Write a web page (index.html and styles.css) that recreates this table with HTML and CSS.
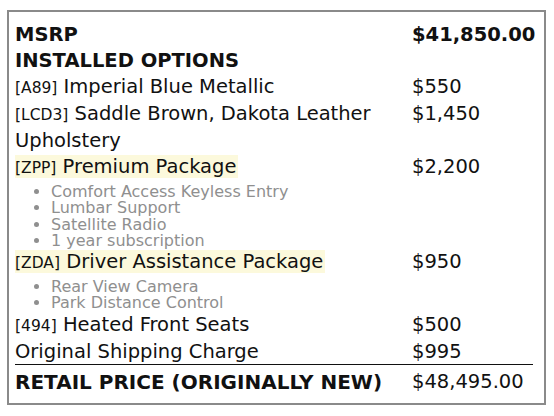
FILE: index.html
```html
<!DOCTYPE html>
<html>
<head>
<meta charset="utf-8">
<link rel="stylesheet" href="styles.css">
</head>
<body>
<div class="card">
  <div class="row head">
    <div class="label">MSRP</div>
    <div class="price">$41,850.00</div>
  </div>
  <div class="row head">
    <div class="label">INSTALLED OPTIONS</div>
    <div class="price"></div>
  </div>
  <div class="row">
    <div class="label"><span class="code">[A89]</span> Imperial Blue Metallic</div>
    <div class="price">$550</div>
  </div>
  <div class="row">
    <div class="label"><span class="code">[LCD3]</span> Saddle Brown, Dakota Leather Upholstery</div>
    <div class="price">$1,450</div>
  </div>
  <div class="row">
    <div class="label"><span class="hl"><span class="code">[ZPP]</span> Premium Package</span>
      <ul class="items">
        <li>Comfort Access Keyless Entry</li>
        <li>Lumbar Support</li>
        <li>Satellite Radio</li>
        <li>1 year subscription</li>
      </ul>
    </div>
    <div class="price">$2,200</div>
  </div>
  <div class="row">
    <div class="label"><span class="hl"><span class="code">[ZDA]</span> Driver Assistance Package</span>
      <ul class="items">
        <li>Rear View Camera</li>
        <li>Park Distance Control</li>
      </ul>
    </div>
    <div class="price">$950</div>
  </div>
  <div class="row">
    <div class="label"><span class="code">[494]</span> Heated Front Seats</div>
    <div class="price">$500</div>
  </div>
  <div class="row">
    <div class="label">Original Shipping Charge</div>
    <div class="price">$995</div>
  </div>
  <div class="row total">
    <div class="label">RETAIL PRICE (ORIGINALLY NEW)</div>
    <div class="price">$48,495.00</div>
  </div>
</div>
</body>
</html>
```
FILE: styles.css
```css
html, body {
  margin: 0;
  padding: 0;
  background: #fff;
}
body {
  font-family: "DejaVu Sans", sans-serif;
  color: #111;
  padding: 10px 8px 0 7px;
}
.card {
  width: 539px;
  height: 395px;
  box-sizing: border-box;
  border: 2px solid #8a8a8a;
  padding: 10px 11px 0 6px;
}
.row {
  display: grid;
  grid-template-columns: 397px 1fr;
  font-size: 19.5px;
  line-height: 26px;
}
.head {
  font-weight: bold;
}
.code {
  font-size: 15.5px;
}
.hl {
  background: #fcf9dc;
  padding-right: 2px;
}
.items {
  margin: 3px 0 0;
  padding: 0 0 0 36px;
  color: #8f8f8f;
  font-size: 16px;
  line-height: 16.3px;
}
.total {
  border-top: 1px solid #111;
  margin-top: -1px;
  padding-top: 4px;
  font-weight: bold;
}
.total .label {
  font-size: 20px;
}
.total .price {
  font-weight: normal;
}
```
